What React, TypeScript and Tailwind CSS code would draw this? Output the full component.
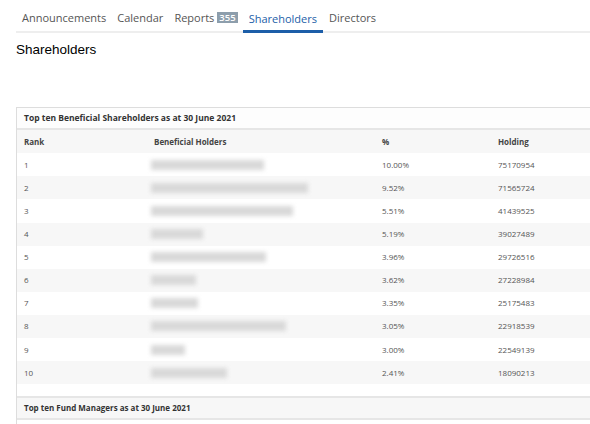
import React from "react";

const rows: [string, number, string, string][] = [
  ["1", 113, "10.00%", "75170954"],
  ["2", 157, "9.52%", "71565724"],
  ["3", 142, "5.51%", "41439525"],
  ["4", 52, "5.19%", "39027489"],
  ["5", 115, "3.96%", "29726516"],
  ["6", 45, "3.62%", "27228984"],
  ["7", 47, "3.35%", "25175483"],
  ["8", 135, "3.05%", "22918539"],
  ["9", 34, "3.00%", "22549139"],
  ["10", 76, "2.41%", "18090213"],
];

export default function App() {
  return (
    <div className="w-[590px] h-[424px] overflow-hidden bg-white text-[#444]" style={{ fontFamily: "'Open Sans', Lato, sans-serif" }}>
      <div className="ml-4 flex items-end border-b-2 border-[#eeeeee] h-[33px] text-[11px]">
        <div className="pl-[6px] pr-[5px] pb-[5px] text-[#555]">Announcements</div>
        <div className="px-[6px] pb-[5px] text-[#555]">Calendar</div>
        <div className="px-[5px] pb-[5px] text-[#555] flex items-center gap-[3px]">
          Reports
          <span className="bg-[#8d9eac] text-white text-[9.5px] leading-[11px] px-[2px] font-semibold">355</span>
        </div>
        <div className="px-[6px] pb-[3px] text-[#1c5ea8] border-b-[3px] border-[#1c5ea8] mb-[-2px] font-medium">Shareholders</div>
        <div className="px-[6px] pb-[5px] text-[#555]">Directors</div>
      </div>
      <div className="ml-4 mt-[7px] text-[13.5px] text-black" style={{ fontFamily: "'Liberation Sans', Arial, sans-serif" }}>
        Shareholders
      </div>
      <div className="ml-4 mt-[47px] w-[600px] border border-[#dddddd] text-[8px]">
        <div className="h-[22px] flex items-center px-[7px] font-bold text-[#333] border-b-2 border-[#e6e6e6] bg-[#fdfdfd] text-[8.5px]">
          Top ten Beneficial Shareholders as at 30 June 2021
        </div>
        <div className="flex h-[23px] items-center bg-[#f7f7f7] font-bold text-[#444]">
          <div className="w-[130px] pl-[7px]">Rank</div>
          <div className="w-[228px] pl-[7px]">Beneficial Holders</div>
          <div className="w-[116px] pl-[7px]">%</div>
          <div className="pl-[7px]">Holding</div>
        </div>
        {rows.map((r, i) => (
          <div key={r[0]} className={`flex h-[23.1px] items-center text-[#555] ${i % 2 === 1 ? "bg-[#f7f7f7]" : "bg-white"}`}>
            <div className="w-[130px] pl-[7px]">{r[0]}</div>
            <div className="w-[228px] pl-[4px]">
              <div className="h-[10px] bg-[#d9d9d9] blur-[2px]" style={{ width: r[1] }} />
            </div>
            <div className="w-[116px] pl-[7px]">{r[2]}</div>
            <div className="pl-[7px]">{r[3]}</div>
          </div>
        ))}
        <div className="h-[12px] bg-white" />
        <div className="h-[24px] flex items-center px-[7px] font-bold text-[#333] border-t-2 border-b-2 border-[#e6e6e6] bg-[#f7f7f7] text-[8px]">
          Top ten Fund Managers as at 30 June 2021
        </div>
        <div className="h-[20px] bg-white" />
      </div>
    </div>
  );
}
